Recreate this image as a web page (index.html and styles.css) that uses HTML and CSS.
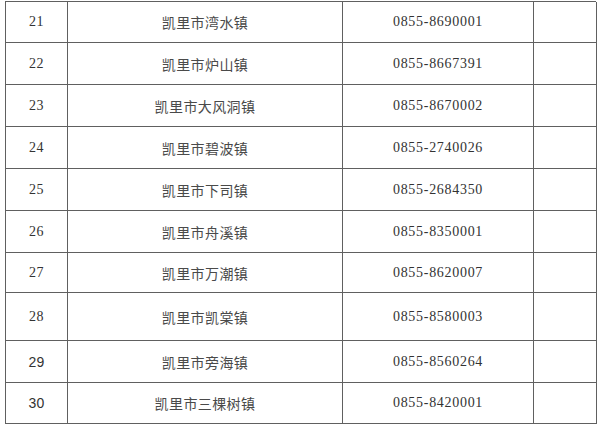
FILE: index.html
```html
<!DOCTYPE html>
<html lang="zh-CN">
<head>
<meta charset="utf-8">
<link rel="stylesheet" href="styles.css">
</head>
<body>
<div class="grid">
  <div class="c num">21</div><div class="c name">凯里市湾水镇</div><div class="c tel">0855-8690001</div><div class="c"></div>
  <div class="c num">22</div><div class="c name">凯里市炉山镇</div><div class="c tel">0855-8667391</div><div class="c"></div>
  <div class="c num">23</div><div class="c name">凯里市大风洞镇</div><div class="c tel">0855-8670002</div><div class="c"></div>
  <div class="c num">24</div><div class="c name">凯里市碧波镇</div><div class="c tel">0855-2740026</div><div class="c"></div>
  <div class="c num">25</div><div class="c name">凯里市下司镇</div><div class="c tel">0855-2684350</div><div class="c"></div>
  <div class="c num">26</div><div class="c name">凯里市舟溪镇</div><div class="c tel">0855-8350001</div><div class="c"></div>
  <div class="c num">27</div><div class="c name">凯里市万潮镇</div><div class="c tel">0855-8620007</div><div class="c"></div>
  <div class="c num">28</div><div class="c name">凯里市凯棠镇</div><div class="c tel">0855-8580003</div><div class="c"></div>
  <div class="c num sans">29</div><div class="c name">凯里市旁海镇</div><div class="c tel">0855-8560264</div><div class="c"></div>
  <div class="c num sans">30</div><div class="c name">凯里市三棵树镇</div><div class="c tel">0855-8420001</div><div class="c"></div>
</div>
</body>
</html>
```
FILE: styles.css
```css
html, body {
  margin: 0;
  padding: 0;
  background: #fff;
}
.grid {
  margin: 1px 0 0 5px;
  width: 591px;
  display: grid;
  grid-template-columns: 62px 275px 191px 63px;
  grid-template-rows: 41px 42px 42px 42px 42px 42px 40px 48px 42px 41px;
  border-left: 1px solid #606060;
  border-top: 1px solid #606060;
  box-sizing: border-box;
}
.c {
  border-right: 1px solid #606060;
  border-bottom: 1px solid #606060;
  display: flex;
  align-items: center;
  justify-content: center;
  box-sizing: border-box;
}
.num {
  font-family: "Liberation Serif", serif;
  font-size: 14px;
  letter-spacing: 0.6px;
  color: #333;
}
.num.sans {
  font-family: "Liberation Sans", Arial, sans-serif;
  font-size: 14px;
  letter-spacing: 0.2px;
}
.name {
  font-family: "Noto Sans CJK SC", sans-serif;
  font-size: 14px;
  letter-spacing: 0.4px;
  color: #4a4a4a;
}
.tel {
  font-family: "Liberation Serif", serif;
  font-size: 14px;
  letter-spacing: 0.7px;
  color: #333;
}
```
